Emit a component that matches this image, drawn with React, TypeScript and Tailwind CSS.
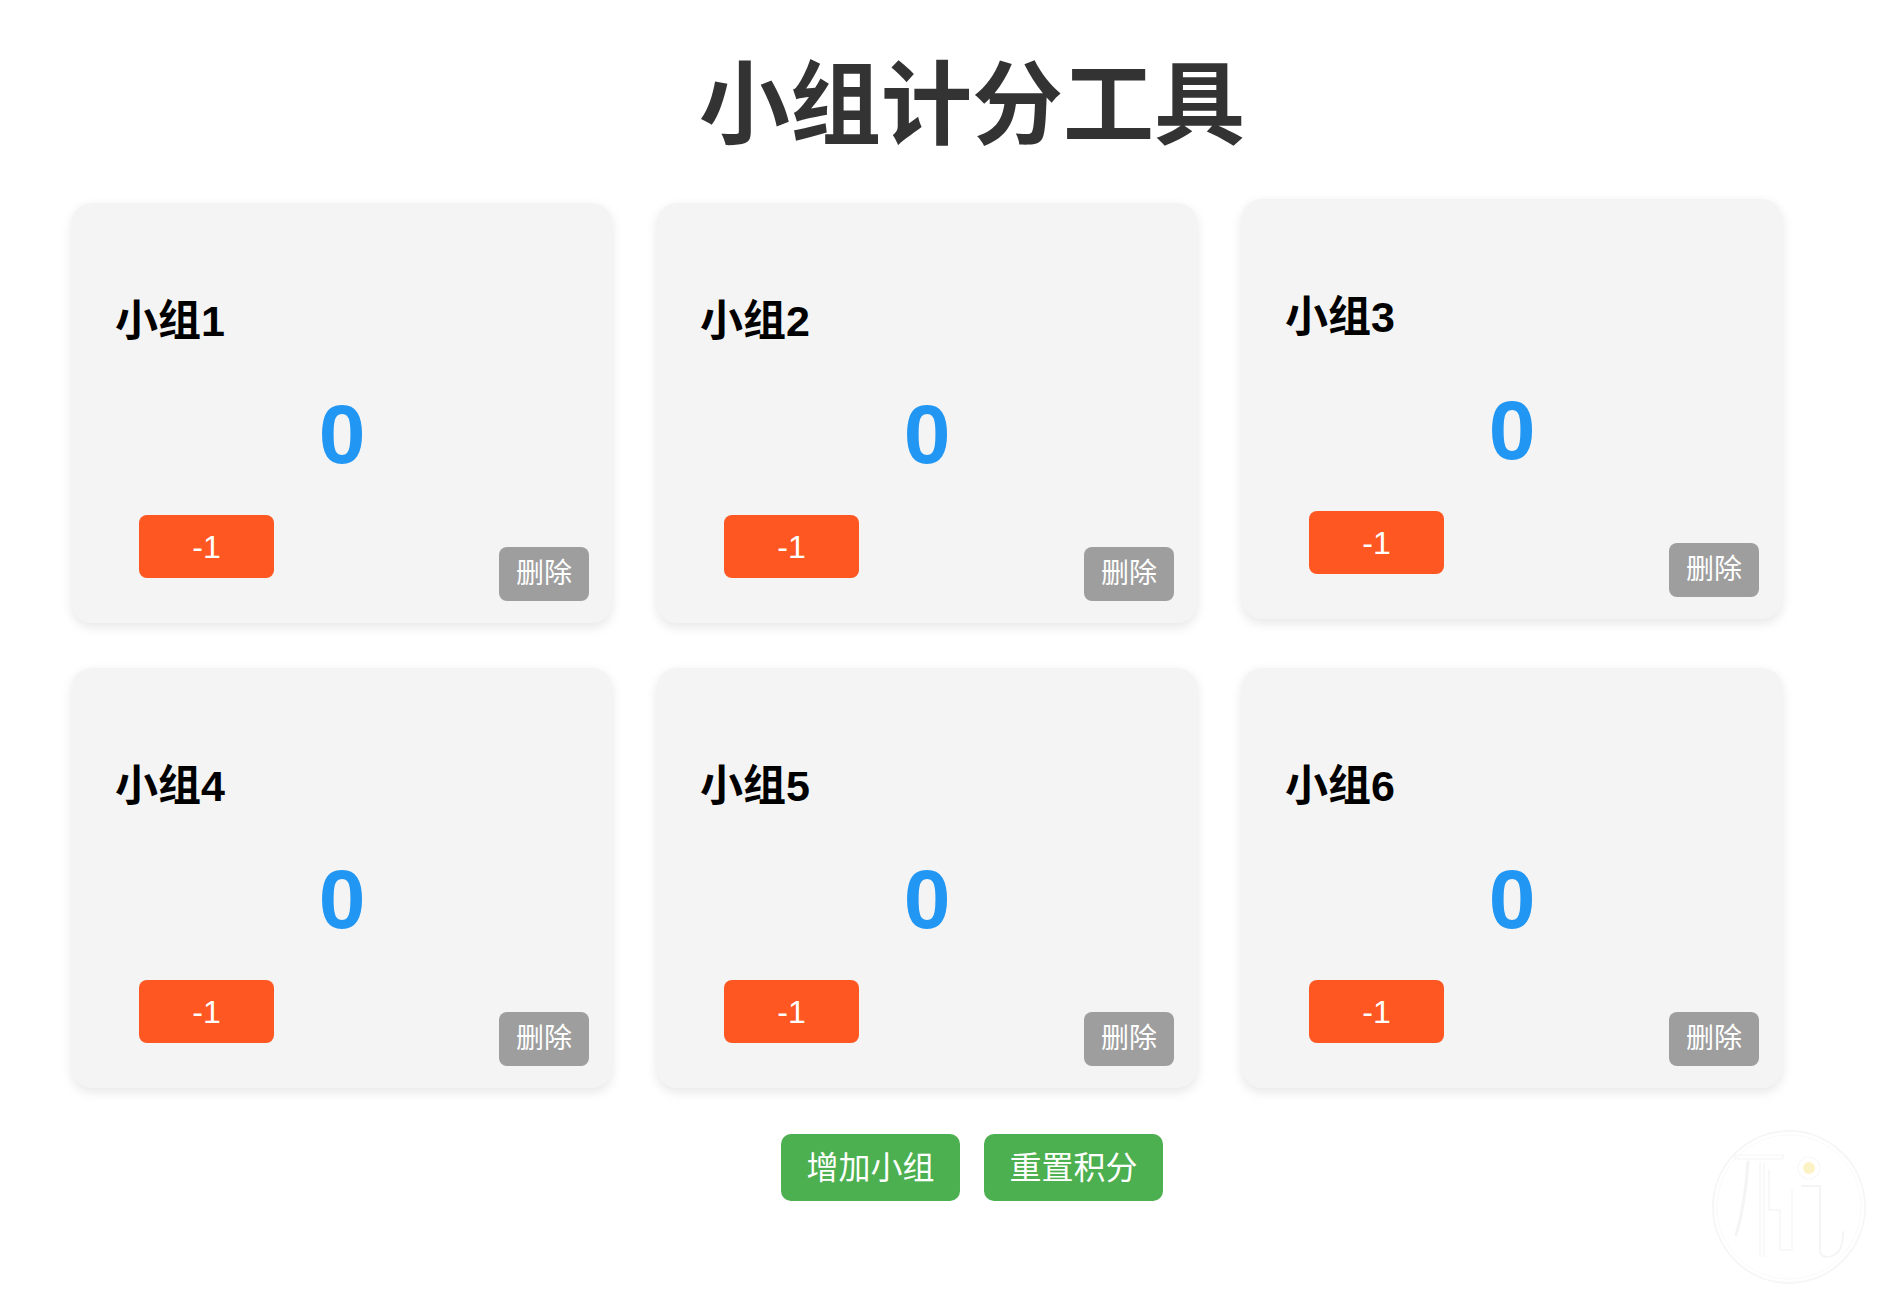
import React from "react";

const groups = ["小组1", "小组2", "小组3", "小组4", "小组5", "小组6"];

function Card({ name, raised }: { name: string; raised?: boolean }) {
  return (
    <div
      className={
        "h-[420px] rounded-[20px] bg-[#f4f4f4] shadow-[0_4px_12px_rgba(0,0,0,0.1)] pt-[97px] flex flex-col " +
        (raised ? "-translate-y-[4px]" : "")
      }
    >
      <div className="pl-[43px] text-[43px] leading-none font-bold text-black">{name}</div>
      <div className="mt-[49px] text-center text-[84px] leading-none font-bold text-[#2196f3]">0</div>
      <div className="mt-[39px] pl-[67px] pr-[23px] flex justify-between items-start">
        <button className="w-[135px] h-[63px] rounded-[8px] bg-[#ff5722] text-white text-[32px] leading-none">
          -1
        </button>
        <button className="mt-[32px] w-[90px] h-[54px] rounded-[8px] bg-[#9e9e9e] text-white text-[28px] leading-none">
          删除
        </button>
      </div>
    </div>
  );
}

function Watermark() {
  return (
    <svg
      className="absolute left-[1680px] top-[1100px]"
      width="203"
      height="201"
      viewBox="0 0 203 201"
      fill="none"
    >
      <circle cx="109" cy="107" r="76" stroke="#f6f6f6" strokeWidth="2" />
      <circle cx="109" cy="107" r="72" stroke="#fafafa" strokeWidth="1" />
      <path d="M55 55 H103 V59 H55 Z" stroke="#f5f5f5" strokeWidth="1.2" />
      <path d="M68 62 C66 90 62 115 56 135" stroke="#f4f4f4" strokeWidth="3" strokeLinecap="round" />
      <path d="M80 62 V157 M84 62 V157" stroke="#f6f6f6" strokeWidth="1.2" />
      <path d="M89 70 V110 H100 V150 H112 V90" stroke="#f6f6f6" strokeWidth="1.5" strokeLinecap="round" />
      <path d="M122 86 H140 V150 C140 157 146 158 152 156 C160 153 163 146 163 132" stroke="#f4f4f4" strokeWidth="1.8" strokeLinecap="round" />
      <circle cx="129" cy="68" r="11" stroke="#f8f8f8" strokeWidth="1.2" />
      <circle cx="129" cy="68" r="6" fill="#fcf2c4" />
    </svg>
  );
}

export default function App() {
  return (
    <div className="relative min-h-[1301px] w-full bg-white font-['Liberation_Sans','Noto_Sans_CJK_SC',sans-serif] overflow-hidden">
      <h1 className="pl-[61px] pt-[60px] text-center text-[91px] leading-none font-bold text-[#333333]">
        小组计分工具
      </h1>
      <div className="ml-[72px] mt-[52px] grid grid-cols-[repeat(3,540px)] gap-[45px]">
        {groups.map((g, i) => (
          <Card key={g} name={g} raised={i === 2} />
        ))}
      </div>
      <div className="pl-[61px] mt-[46px] flex justify-center gap-[24px]">
        <button className="w-[179px] h-[67px] rounded-[10px] bg-[#4caf50] text-white text-[32px] leading-none">
          增加小组
        </button>
        <button className="w-[179px] h-[67px] rounded-[10px] bg-[#4caf50] text-white text-[32px] leading-none">
          重置积分
        </button>
      </div>
      <Watermark />
    </div>
  );
}
